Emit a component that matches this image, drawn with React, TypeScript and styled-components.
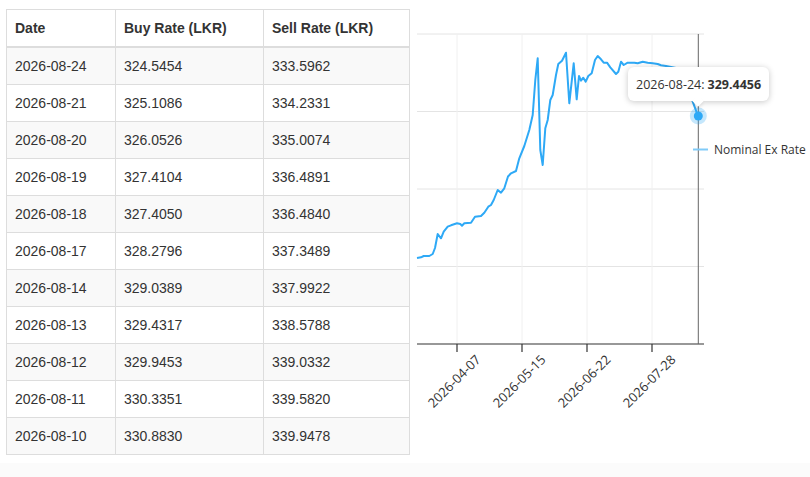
import styled, { createGlobalStyle } from "styled-components";

const GlobalStyle = createGlobalStyle`
  html, body {
    margin: 0;
    padding: 0;
    background: #fff;
  }
  body {
    font-family: "Liberation Sans", Arial, sans-serif;
    font-size: 14px;
    color: #333;
  }
`;

const Page = styled.div`
  width: 810px;
  height: 477px;
  display: flex;
  flex-direction: column;
  overflow: hidden;
`;

const Main = styled.div`
  display: flex;
  align-items: flex-start;
  height: 463px;
`;

const TableWrap = styled.div`
  padding: 9px 0 0 6px;
  flex-shrink: 0;
`;

const Table = styled.table`
  width: 403px;
  border-collapse: collapse;
  table-layout: fixed;
  border: 1px solid #ddd;
`;

const HeadCell = styled.th`
  text-align: left;
  font-weight: bold;
  padding: 8px;
  line-height: 20px;
  border: 1px solid #ddd;
  border-bottom-width: 2px;
`;

const BodyRow = styled.tr<{ $striped: boolean }>`
  background: ${(p) => (p.$striped ? "#f9f9f9" : "#fff")};
`;

const Cell = styled.td`
  padding: 8px;
  line-height: 20px;
  border: 1px solid #ddd;
`;

const ChartBox = styled.div`
  position: relative;
  width: 401px;
  height: 463px;
  font-family: "Open Sans", "Noto Sans", sans-serif;
`;

const ChartSvg = styled.svg`
  display: block;
  width: 401px;
  height: 463px;
`;

// floating tooltip over the hovered point
const Tooltip = styled.div`
  position: absolute;
  left: 218px;
  top: 67px;
  width: 141px;
  height: 34px;
  box-sizing: border-box;
  padding: 0 8px;
  display: flex;
  align-items: center;
  background: #fff;
  border-radius: 6px;
  box-shadow: 0 1px 6px rgba(0, 0, 0, 0.22);
  font-size: 12.5px;
  color: #333;
  white-space: nowrap;

  &::after {
    content: "";
    position: absolute;
    left: 66px;
    bottom: -4px;
    width: 8px;
    height: 8px;
    background: #fff;
    transform: rotate(45deg);
    box-shadow: 2px 2px 3px rgba(0, 0, 0, 0.08);
  }

  b {
    margin-left: 3px;
  }
`;

const Footer = styled.div`
  flex: 1;
  background: #fbfbfb;
`;

const rows = [
  ["2026-08-24", "324.5454", "333.5962"],
  ["2026-08-21", "325.1086", "334.2331"],
  ["2026-08-20", "326.0526", "335.0074"],
  ["2026-08-19", "327.4104", "336.4891"],
  ["2026-08-18", "327.4050", "336.4840"],
  ["2026-08-17", "328.2796", "337.3489"],
  ["2026-08-14", "329.0389", "337.9922"],
  ["2026-08-13", "329.4317", "338.5788"],
  ["2026-08-12", "329.9453", "339.0332"],
  ["2026-08-11", "330.3351", "339.5820"],
  ["2026-08-10", "330.8830", "339.9478"],
];

const linePoints: [number, number][] = [
  [416, 258], [420, 257.3], [422.7, 256], [428.3, 256], [431.7, 254], [434, 248],
  [436.7, 234], [440, 238.3], [442.7, 231.7], [446.7, 226.7], [450, 225.3],
  [456, 223.3], [459.3, 224], [461, 225.7], [463.3, 223.3], [470, 222.7],
  [474, 216.7], [480, 216], [483.3, 212.7], [487.3, 206.7], [490, 205],
  [492.7, 200], [496.7, 190], [500, 192.7], [503.3, 188.3], [507, 176.5],
  [510, 173.3], [515, 171], [518.3, 158.3], [523.3, 146], [528.3, 130],
  [531.7, 115], [534.3, 80], [536.7, 58.3], [539.3, 150], [541.7, 165],
  [544.3, 128.3], [546.7, 120], [549.3, 100], [551.7, 95], [555, 75],
  [557.3, 64], [561, 60.7], [565, 52.7], [568.3, 103.3], [572.7, 63.3],
  [575.7, 99.3], [578, 76], [580, 80.7], [582.3, 77.7], [584.7, 81.7],
  [587.3, 76], [590.7, 73.3], [594, 60], [596.7, 56], [600, 59.3],
  [602.7, 62.7], [606, 62.7], [609.3, 67.3], [615, 74], [617.3, 71.7],
  [620, 61.7], [622.7, 65], [626.7, 62.7], [633.3, 62.7], [636.7, 63.3],
  [641.7, 61.7], [646.7, 62.7], [651.7, 63.3], [656.7, 64], [660, 65.3],
  [665, 66], [675, 68], [685, 78], [691.7, 101.7], [697, 116],
];

const ticks = [
  { x: 456, label: "2026-04-07" },
  { x: 521, label: "2026-05-15" },
  { x: 586, label: "2026-06-22" },
  { x: 651, label: "2026-07-28" },
];

const gridY = [34, 111.5, 189, 266.5];

const RateChart = () => {
  const d = linePoints.map(([x, y], i) => `${i ? "L" : "M"}${x} ${y}`).join(" ");
  return (
    <ChartBox>
      <ChartSvg viewBox="409 0 401 463">
        {gridY.map((y) => (
          <line key={y} x1={416} x2={703} y1={y} y2={y} stroke="#e4e4e4" strokeWidth={1} />
        ))}
        {ticks.map((t) => (
          <line key={t.x} x1={t.x} x2={t.x} y1={34} y2={344} stroke="#f0f0f0" strokeWidth={1} />
        ))}
        <line x1={416} x2={703} y1={344} y2={344} stroke="#333" strokeWidth={1.2} />
        {ticks.map((t) => (
          <g key={t.label}>
            <line x1={t.x} x2={t.x} y1={344} y2={352} stroke="#333" strokeWidth={1.2} />
            <text
              transform={`translate(${t.x - 3} 381) rotate(-45)`}
              textAnchor="middle"
              dominantBaseline="central"
              fontSize={13}
              fill="#333"
            >
              {t.label}
            </text>
          </g>
        ))}
        <line x1={697.3} x2={697.3} y1={34} y2={344} stroke="#666" strokeWidth={1} />
        <path d={d} fill="none" stroke="#2ea9f6" strokeWidth={2} strokeLinejoin="round" />
        <circle cx={697.3} cy={116} r={8.5} fill="#2ea9f6" opacity={0.28} />
        <circle cx={697.3} cy={116} r={4.5} fill="#2ea9f6" />
        <line x1={692} x2={707} y1={149.5} y2={149.5} stroke="#80cbf8" strokeWidth={2} />
        <text x={713} y={153.5} fontSize={12} fill="#333">
          Nominal Ex Rate
        </text>
      </ChartSvg>
      <Tooltip>
        2026-08-24:<b>329.4456</b>
      </Tooltip>
    </ChartBox>
  );
};

export default function App() {
  return (
    <Page>
      <GlobalStyle />
      <Main>
        <TableWrap>
          <Table>
            <colgroup>
              <col style={{ width: 109 }} />
              <col style={{ width: 148 }} />
              <col style={{ width: 146 }} />
            </colgroup>
            <thead>
              <tr>
                <HeadCell>Date</HeadCell>
                <HeadCell>Buy Rate (LKR)</HeadCell>
                <HeadCell>Sell Rate (LKR)</HeadCell>
              </tr>
            </thead>
            <tbody>
              {rows.map((r, i) => (
                <BodyRow key={r[0]} $striped={i % 2 === 0}>
                  <Cell>{r[0]}</Cell>
                  <Cell>{r[1]}</Cell>
                  <Cell>{r[2]}</Cell>
                </BodyRow>
              ))}
            </tbody>
          </Table>
        </TableWrap>
        <RateChart />
      </Main>
      <Footer />
    </Page>
  );
}
